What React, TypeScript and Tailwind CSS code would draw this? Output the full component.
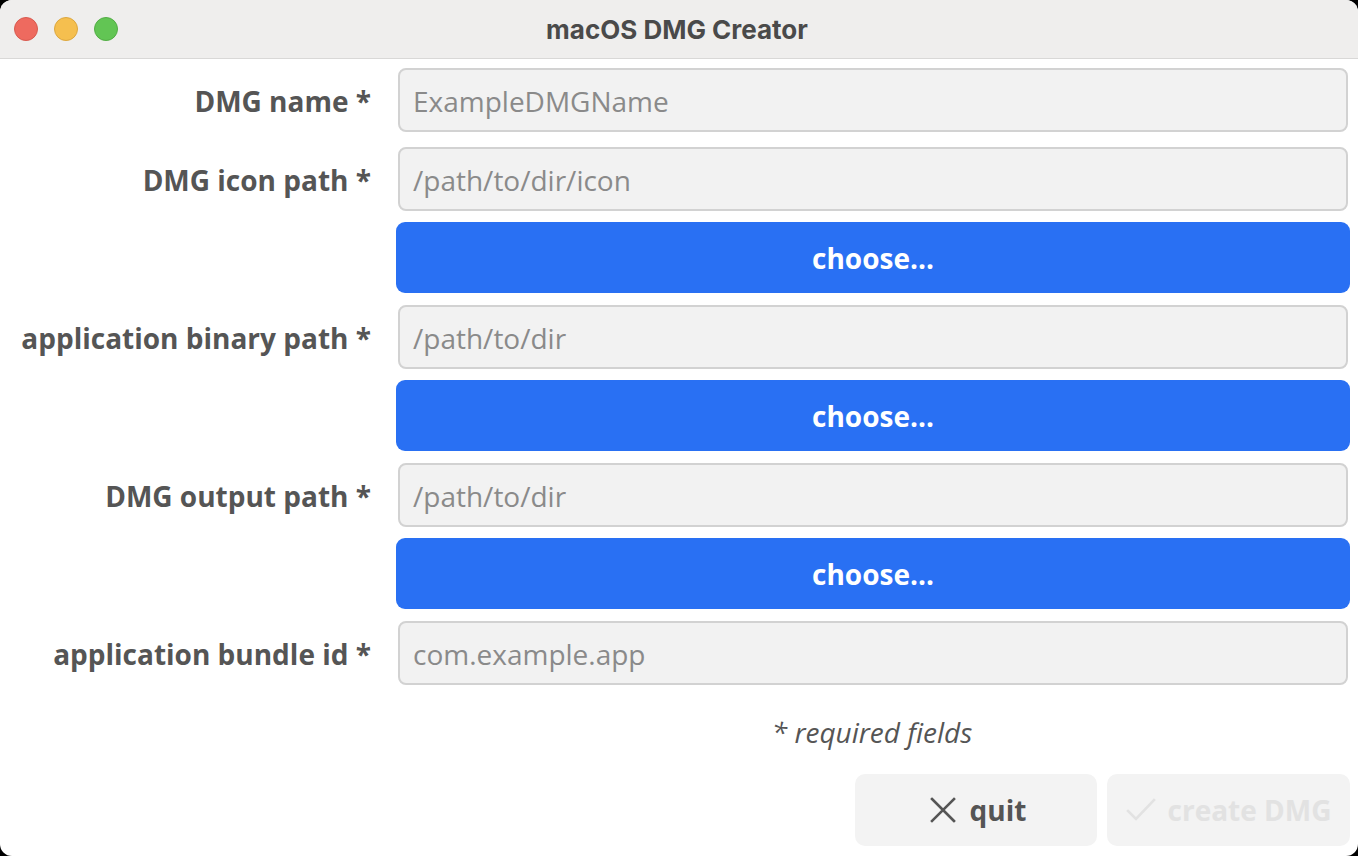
const fields = [
  { label: 'DMG name *', placeholder: 'ExampleDMGName', choose: false, mt: 'mt-[9px]' },
  { label: 'DMG icon path *', placeholder: '/path/to/dir/icon', choose: true, mt: 'mt-[15px]' },
  { label: 'application binary path *', placeholder: '/path/to/dir', choose: true, mt: 'mt-[12px]' },
  { label: 'DMG output path *', placeholder: '/path/to/dir', choose: true, mt: 'mt-[12px]' },
  { label: 'application bundle id *', placeholder: 'com.example.app', choose: false, mt: 'mt-[12px]' },
];

export default function App() {
  return (
    <div className="w-[1358px] h-[856px] bg-black">
      <div
        className="w-full h-full bg-white rounded-[12px] overflow-hidden flex flex-col"
        style={{ fontFamily: '"Open Sans", "Noto Sans", sans-serif' }}
      >
        {/* title bar */}
        <div className="relative h-[59px] shrink-0 bg-[#efeeed] border-b border-[#d9d8d7] flex items-center">
          <div className="flex items-center gap-[16px] pl-[14px]">
            <span className="w-[24px] h-[24px] rounded-full bg-[#ee6a5f] border border-[#d85a4f]" />
            <span className="w-[24px] h-[24px] rounded-full bg-[#f5bf4f] border border-[#dca73f]" />
            <span className="w-[24px] h-[24px] rounded-full bg-[#62c554] border border-[#52ad45]" />
          </div>
          <div
            className="absolute inset-0 flex items-center justify-center text-[26px] font-bold text-[#4a4a4a] pr-[4px]"
            style={{ fontFamily: 'Inter, "Liberation Sans", sans-serif' }}
          >
            macOS DMG Creator
          </div>
        </div>

        {/* form */}
        <div className="flex flex-col pr-[8px]">
          {fields.map((f) => (
            <div key={f.label} className="flex flex-col">
              <div className={`flex items-center ${f.mt}`}>
                <div className="w-[371px] text-right text-[28px] font-bold text-[#555555] whitespace-nowrap pt-[2px]">
                  {f.label}
                </div>
                <div className="flex-1 ml-[25px] px-[2px]">
                  <div className="h-[64px] bg-[#f2f2f2] border-2 border-[#d2d2d2] rounded-[8px] flex items-center px-[13px] pt-[2px] text-[28px] text-[#8a8a8a]">
                    {f.placeholder}
                  </div>
                </div>
              </div>
              {f.choose && (
                <div className="flex mt-[11px]">
                  <div className="w-[371px]" />
                  <button className="flex-1 ml-[25px] h-[71px] bg-[#2970f3] rounded-[9px] text-white text-[28px] font-bold flex items-center justify-center">
                    choose...
                  </button>
                </div>
              )}
            </div>
          ))}

          <div className="flex mt-[28px]">
            <div className="w-[371px]" />
            <div className="flex-1 ml-[25px] text-center italic text-[28px] text-[#555555] leading-[38px] pr-[2px]">
              * required fields
            </div>
          </div>

          <div className="flex justify-end gap-[10px] mt-[23px]">
            <button className="w-[242px] h-[72px] bg-[#f3f3f3] rounded-[10px] flex items-center justify-center gap-[14px] text-[28px] font-bold text-[#555555] pl-[4px]">
              <svg width="26" height="26" viewBox="0 0 26 26" fill="none" stroke="#555555" strokeWidth="2.6" strokeLinecap="square">
                <path d="M2 2 L24 24 M24 2 L2 24" />
              </svg>
              quit
            </button>
            <button className="w-[243px] h-[72px] bg-[#f3f3f3] rounded-[10px] flex items-center justify-center gap-[12px] text-[28px] font-bold text-[#e2e2e2]">
              <svg width="30" height="24" viewBox="0 0 30 24" fill="none" stroke="#e2e2e2" strokeWidth="2.6" strokeLinecap="square">
                <path d="M2 13 L10 21 L28 2" />
              </svg>
              create DMG
            </button>
          </div>
        </div>
      </div>
    </div>
  );
}
